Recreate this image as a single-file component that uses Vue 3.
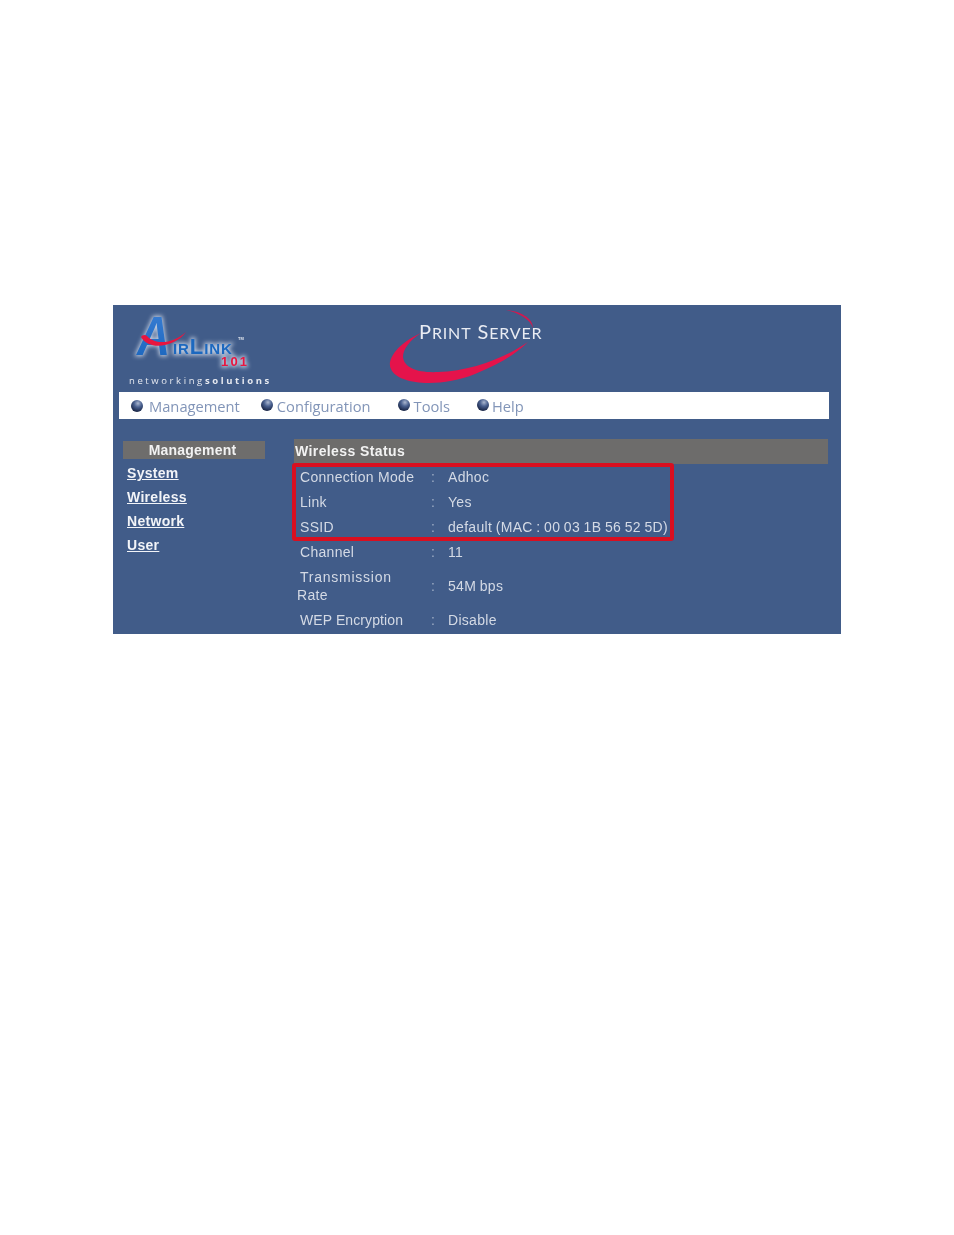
<script setup>
const nav = [
  { label: 'Management', cls: 'n1' },
  { label: 'Configuration', cls: 'n2' },
  { label: 'Tools', cls: 'n3' },
  { label: 'Help', cls: 'n4' },
]
const links = ['System', 'Wireless', 'Network', 'User']
const rows = [
  { k: 'Connection Mode', v: 'Adhoc' },
  { k: 'Link', v: 'Yes' },
  { k: 'SSID', v: 'default (MAC : 00 03 1B 56 52 5D)' },
  { k: 'Channel', v: '11' },
  { k: 'Transmission', k2: 'Rate', v: '54M bps', tall: true },
  { k: 'WEP Encryption', v: 'Disable', tight: true },
]
</script>

<template>
  <div class="page">
    <div class="panel">
      <header class="head">
        <svg class="logo" viewBox="113 305 170 87" width="170" height="87">
          <defs>
            <linearGradient id="ag" x1="0" y1="0" x2="0" y2="1">
              <stop offset="0" stop-color="#3d80d6" />
              <stop offset="1" stop-color="#1763bb" />
            </linearGradient>
            <filter id="glow" x="-30%" y="-30%" width="160%" height="160%">
              <feGaussianBlur stdDeviation="2" />
            </filter>
          </defs>
          <g filter="url(#glow)" fill="#dfe8f6" stroke="#dfe8f6" stroke-width="2.5" opacity=".8">
            <text transform="translate(137 355) scale(.82 1)" class="bigA">A</text>
            <text x="173" y="354" class="irlink">IR<tspan class="lk">L</tspan>INK</text>
            <text x="221" y="366" class="n101">101</text>
          </g>
          <text transform="translate(137 355) scale(.82 1)" class="bigA" fill="url(#ag)">A</text>
          <path d="M141 337 C150 352 176 346 186 332 C174 343 156 346 147 336 C145 334 142 335 141 337Z" fill="#e8153f" />
          <text x="173" y="354" class="irlink" fill="#1c68bf">IR<tspan class="lk">L</tspan>INK</text>
          <text x="238" y="340" class="tm" fill="#e4e8f0">TM</text>
          <text x="221" y="366" class="n101">101</text>
          <text x="129" y="384" class="tag">networking<tspan class="tagb">solutions</tspan></text>
        </svg>
        <svg class="ps" viewBox="385 305 165 87" width="165" height="87">
          <path d="M421 333 C398 343 386 360 391 369 C398 385 440 388 475 374 C497 365 515 355 528 342 C505 358 470 371 438 372 C418 373 404 368 403 357 C403 349 410 340 421 333Z" fill="#e5134b" />
          <path d="M506 310 C520 311 533 318 533 328 C530 319 519 313 506 310Z" fill="#d3184f" />
          <text x="419" y="339" class="pst">P<tspan class="sc">RINT</tspan> S<tspan class="sc">ERVER</tspan></text>
        </svg>
      </header>

      <nav class="nav">
        <span v-for="n in nav" :key="n.label" class="nav-item" :class="n.cls">
          <i class="ball"></i>{{ n.label }}
        </span>
      </nav>

      <div class="body">
        <aside class="side">
          <div class="side-head">Management</div>
          <a v-for="l in links" :key="l" class="side-link">{{ l }}</a>
        </aside>
        <section class="main">
          <h2 class="title">Wireless Status</h2>
          <div class="table">
            <div class="hl"></div>
            <div v-for="r in rows" :key="r.k" class="row" :class="{ tall: r.tall, tight: r.tight }">
              <div class="k">
                <template v-if="r.k2"><span class="k1">{{ r.k }}</span><span class="k2">{{ r.k2 }}</span></template>
                <template v-else>{{ r.k }}</template>
              </div>
              <div class="c">:</div>
              <div class="v">{{ r.v }}</div>
            </div>
          </div>
        </section>
      </div>
    </div>
  </div>
</template>

<style scoped>
.page {
  height: 1235px;
  box-sizing: border-box;
  padding: 305px 0 0 113px;
  font-family: "Liberation Sans", Arial, sans-serif;
}
.panel {
  width: 728px;
  height: 329px;
  background: #415c89;
  overflow: hidden;
  filter: blur(0.35px);
}
.head {
  height: 87px;
  display: flex;
}
.logo { display: block; }
.ps { display: block; margin-left: 102px; }
.bigA { font: italic bold 56px "Liberation Sans", sans-serif; }
.irlink { font: bold 15px "Liberation Sans", sans-serif; letter-spacing: 0.9px; }
.lk { font-size: 22px; }
.tm { font: bold 4px "Liberation Sans", sans-serif; }
.n101 {
  font: bold 13px "Liberation Sans", sans-serif;
  fill: #e8153f;
  letter-spacing: 2.2px;
}
.tag {
  font: 9.5px "Open Sans", sans-serif;
  fill: #e6e9f0;
  letter-spacing: 2.6px;
}
.tagb { font-weight: 700; }
.pst { font: 20px "Lato", sans-serif; fill: #e9ecf3; letter-spacing: 0.85px; }
.sc { font-size: 16px; }

.nav {
  margin: 0 12px 0 6px;
  height: 27px;
  background: #fff;
  display: flex;
  align-items: center;
  padding-left: 12px;
  font: 14.7px "Open Sans", sans-serif;
  color: #8295b8;
}
.nav-item { display: flex; align-items: center; white-space: nowrap; padding-top: 1px; }
.ball {
  width: 12px;
  height: 12px;
  border-radius: 50%;
  background: radial-gradient(circle at 58% 28%, #aab6cf 0, #4a6190 35%, #121d3c 82%);
  margin-right: 6px;
}
.n2 { margin-left: 21px; }
.n2 .ball, .n3 .ball, .n4 .ball { margin-top: -2px; margin-right: 4px; }
.n3 { margin-left: 27px; }
.n4 { margin-left: 27px; }
.n4 .ball { margin-right: 3px; }

.body {
  display: flex;
  padding: 20px 0 0 10px;
}
.side { width: 171px; padding-top: 2px; }
.side-head {
  width: 142px;
  height: 18px;
  line-height: 19px;
  margin-bottom: 2px;
  padding-right: 3px;
  box-sizing: border-box;
  background: #6e6d6c;
  color: #f2f2f2;
  font-weight: 700;
  font-size: 14px;
  letter-spacing: 0.2px;
  text-align: center;
}
.side-link {
  display: block;
  height: 24px;
  line-height: 24px;
  padding-left: 4px;
  color: #f2f4f8;
  font-weight: 700;
  font-size: 14px;
  letter-spacing: 0.3px;
  text-decoration: underline;
}
.main { width: 534px; }
.title {
  margin: 0;
  height: 25px;
  line-height: 25px;
  padding-left: 1px;
  background: #6d6c6b;
  color: #f2f2f2;
  font-size: 14px;
  font-weight: 700;
  letter-spacing: 0.4px;
}
.table { position: relative; padding-top: 1px; font-size: 14px; color: #d4dae5; letter-spacing: 0.3px; }
.hl {
  position: absolute;
  left: -2px;
  top: -1px;
  width: 382px;
  height: 78px;
  box-sizing: border-box;
  border: 4px solid #d90f20;
  border-radius: 3px;
}
.row {
  display: grid;
  grid-template-columns: 137px 17px 1fr;
  height: 25px;
  line-height: 25px;
  white-space: nowrap;
}
.row.tall { height: 43px; line-height: 18px; align-items: center; padding-bottom: 2px; box-sizing: border-box; }
.k { padding-left: 6px; }
.c { color: #9fadc5; }
.v { word-spacing: -0.6px; }
.tall .k { padding-left: 3px; }
.k1 { display: block; padding-left: 3px; letter-spacing: 0.75px; }
.k2 { display: block; }
.tight .k { letter-spacing: 0.1px; }
</style>

<style>
body { background: #fff; }
</style>
